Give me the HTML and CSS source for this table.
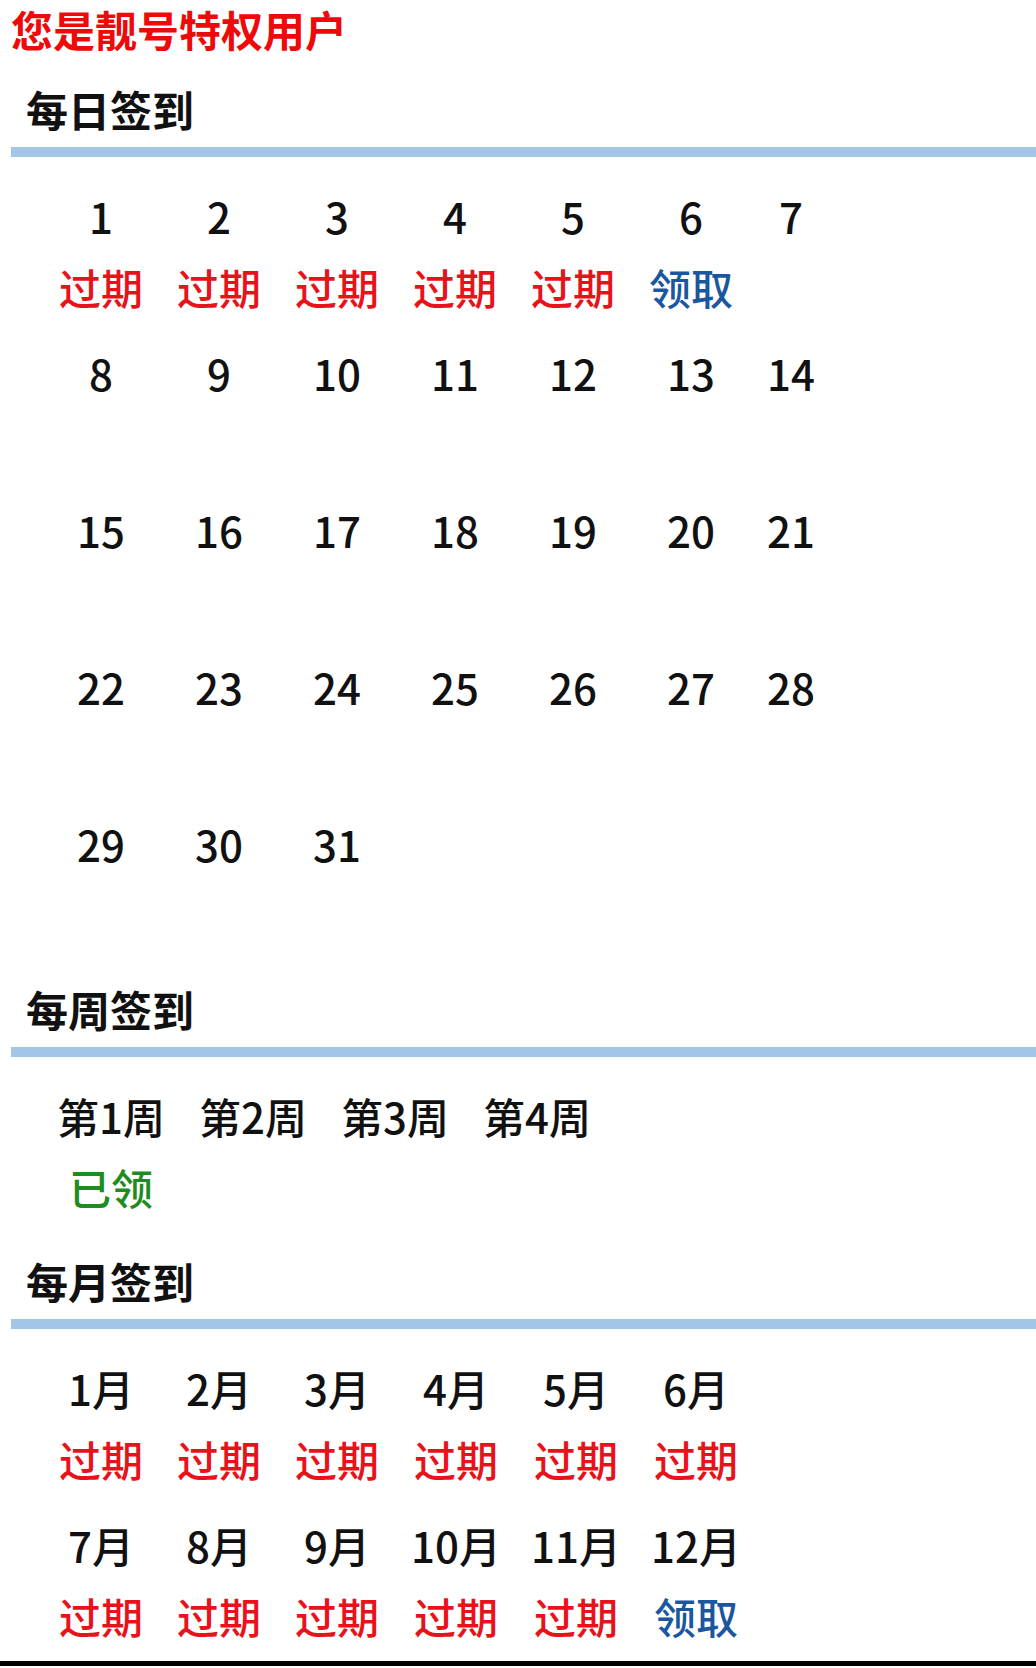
FILE: index.html
```html
<!DOCTYPE html>
<html lang="zh-CN">
<head>
<meta charset="utf-8">
<title>签到</title>
<link rel="stylesheet" href="styles.css">
</head>
<body>
<h1 class="title">您是靓号特权用户</h1>

<section class="block">
  <h2 class="block-head">每日签到</h2>
  <div class="grid grid-day">
    <div class="cell"><div class="num">1</div><div class="st st-exp">过期</div></div>
    <div class="cell"><div class="num">2</div><div class="st st-exp">过期</div></div>
    <div class="cell"><div class="num">3</div><div class="st st-exp">过期</div></div>
    <div class="cell"><div class="num">4</div><div class="st st-exp">过期</div></div>
    <div class="cell"><div class="num">5</div><div class="st st-exp">过期</div></div>
    <div class="cell"><div class="num">6</div><div class="st st-get">领取</div></div>
    <div class="cell"><div class="num">7</div><div class="st"></div></div>
    <div class="cell"><div class="num">8</div><div class="st"></div></div>
    <div class="cell"><div class="num">9</div><div class="st"></div></div>
    <div class="cell"><div class="num">10</div><div class="st"></div></div>
    <div class="cell"><div class="num">11</div><div class="st"></div></div>
    <div class="cell"><div class="num">12</div><div class="st"></div></div>
    <div class="cell"><div class="num">13</div><div class="st"></div></div>
    <div class="cell"><div class="num">14</div><div class="st"></div></div>
    <div class="cell"><div class="num">15</div><div class="st"></div></div>
    <div class="cell"><div class="num">16</div><div class="st"></div></div>
    <div class="cell"><div class="num">17</div><div class="st"></div></div>
    <div class="cell"><div class="num">18</div><div class="st"></div></div>
    <div class="cell"><div class="num">19</div><div class="st"></div></div>
    <div class="cell"><div class="num">20</div><div class="st"></div></div>
    <div class="cell"><div class="num">21</div><div class="st"></div></div>
    <div class="cell"><div class="num">22</div><div class="st"></div></div>
    <div class="cell"><div class="num">23</div><div class="st"></div></div>
    <div class="cell"><div class="num">24</div><div class="st"></div></div>
    <div class="cell"><div class="num">25</div><div class="st"></div></div>
    <div class="cell"><div class="num">26</div><div class="st"></div></div>
    <div class="cell"><div class="num">27</div><div class="st"></div></div>
    <div class="cell"><div class="num">28</div><div class="st"></div></div>
    <div class="cell"><div class="num">29</div><div class="st"></div></div>
    <div class="cell"><div class="num">30</div><div class="st"></div></div>
    <div class="cell"><div class="num">31</div><div class="st"></div></div>
  </div>
</section>

<section class="block">
  <h2 class="block-head">每周签到</h2>
  <div class="grid grid-week">
    <div class="cell"><div class="num">第1周</div><div class="st st-done">已领</div></div>
    <div class="cell"><div class="num">第2周</div><div class="st"></div></div>
    <div class="cell"><div class="num">第3周</div><div class="st"></div></div>
    <div class="cell"><div class="num">第4周</div><div class="st"></div></div>
  </div>
</section>

<section class="block">
  <h2 class="block-head">每月签到</h2>
  <div class="grid grid-month">
    <div class="cell"><div class="num">1月</div><div class="st st-exp">过期</div></div>
    <div class="cell"><div class="num">2月</div><div class="st st-exp">过期</div></div>
    <div class="cell"><div class="num">3月</div><div class="st st-exp">过期</div></div>
    <div class="cell"><div class="num">4月</div><div class="st st-exp">过期</div></div>
    <div class="cell"><div class="num">5月</div><div class="st st-exp">过期</div></div>
    <div class="cell"><div class="num">6月</div><div class="st st-exp">过期</div></div>
    <div class="cell"><div class="num">7月</div><div class="st st-exp">过期</div></div>
    <div class="cell"><div class="num">8月</div><div class="st st-exp">过期</div></div>
    <div class="cell"><div class="num">9月</div><div class="st st-exp">过期</div></div>
    <div class="cell"><div class="num">10月</div><div class="st st-exp">过期</div></div>
    <div class="cell"><div class="num">11月</div><div class="st st-exp">过期</div></div>
    <div class="cell"><div class="num">12月</div><div class="st st-get">领取</div></div>
  </div>
</section>

<div class="bottom-line"></div>
</body>
</html>
```

FILE: styles.css
```css
html, body {
  margin: 0;
  padding: 0;
  background: #ffffff;
}

body {
  padding-left: 11px;
  font-family: "Noto Sans CJK SC", "Noto Sans", sans-serif;
  font-size: 42px;
  color: #000000;
  overflow: hidden;
}

.title {
  margin: 0;
  font-size: 42px;
  line-height: 58px;
  font-weight: 700;
  color: #ee0a0a;
}

.block-head {
  margin: 0;
  padding: 22px 0 9px 15px;
  font-size: 42px;
  line-height: 58px;
  font-weight: 700;
  color: #111111;
  border-bottom: 10px solid #a3c5e8;
}

.grid {
  display: grid;
  row-gap: 13px;
  margin: 25px 0 4px 31px;
}

.grid-day {
  grid-template-columns: repeat(6, 118px) 82px;
}

.grid-week {
  margin-left: 29px;
  grid-template-columns: repeat(4, 142px);
}

.grid-month {
  grid-template-columns: 118px 118px 118px 120px 120px 120px;
  margin-bottom: 0;
}

.cell {
  text-align: center;
  white-space: nowrap;
}

.num {
  height: 68px;
  padding-bottom: 4px;
  line-height: 68px;
  font-weight: 500;
  color: #111111;
}

.st {
  height: 66px;
  padding-bottom: 6px;
  line-height: 66px;
  font-weight: 500;
}

.st-exp {
  color: #e8131a;
}

.st-get {
  color: #1b579f;
}

.st-done {
  color: #1f8c22;
}

.bottom-line {
  margin-top: 6px;
  margin-left: -11px;
  height: 5px;
  background: #000000;
}
```
